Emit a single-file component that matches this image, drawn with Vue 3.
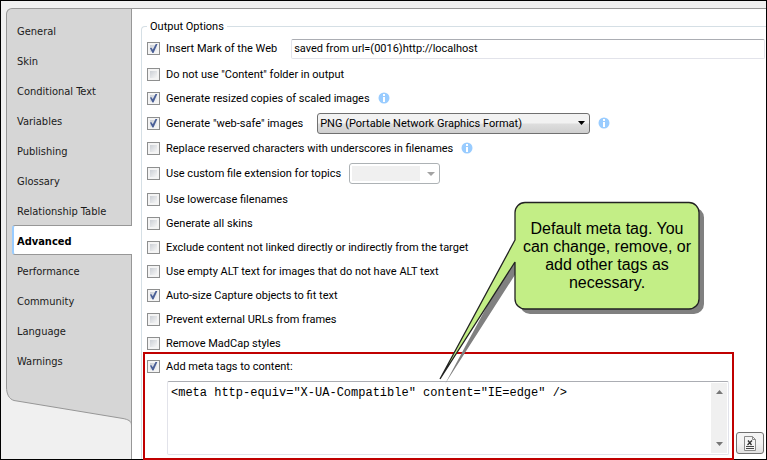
<script setup>
import { ref } from 'vue'

const tabs = ['General', 'Skin', 'Conditional Text', 'Variables', 'Publishing', 'Glossary', 'Relationship Table', 'Advanced', 'Performance', 'Community', 'Language', 'Warnings']
const active = ref('Advanced')

const options = ref([
  { id: 'motw', label: 'Insert Mark of the Web', on: true, field: 'text', size: 'first' },
  { id: 'folder', label: 'Do not use "Content" folder in output', on: false },
  { id: 'resized', label: 'Generate resized copies of scaled images', on: true, info: true },
  { id: 'websafe', label: 'Generate "web-safe" images', on: true, field: 'format', info: true, size: 'tall' },
  { id: 'reserved', label: 'Replace reserved characters with underscores in filenames', on: false, info: true },
  { id: 'extension', label: 'Use custom file extension for topics', on: false, field: 'extension', size: 'taller' },
  { id: 'lowercase', label: 'Use lowercase filenames', on: false },
  { id: 'skins', label: 'Generate all skins', on: false },
  { id: 'exclude', label: 'Exclude content not linked directly or indirectly from the target', on: false },
  { id: 'alt', label: 'Use empty ALT text for images that do not have ALT text', on: false },
  { id: 'autosize', label: 'Auto-size Capture objects to fit text', on: true },
  { id: 'frames', label: 'Prevent external URLs from frames', on: false },
  { id: 'madcap', label: 'Remove MadCap styles', on: false },
])
const mark = ref('saved from url=(0016)http://localhost')
const addMeta = ref(true)
const meta = ref('<meta http-equiv="X-UA-Compatible" content="IE=edge" />')
</script>

<template>
  <div class="window">
    <nav class="sidebar">
      <div class="tabs">
        <button v-for="t in tabs" :key="t" type="button" class="tab" :class="{ active: t === active }" @click="active = t">{{ t }}</button>
      </div>
      <svg class="tail" width="126" height="54" viewBox="0 0 126 54" aria-hidden="true">
        <path d="M0.5 0V12C0.5 19 3 24 8 25.500L117 43.500C122 44.500 125.500 46 125.500 50V0Z" fill="#d6d6d6" />
        <path d="M0.5 0V12C0.5 19 3 24 8 25.500L117 43.500C122 44.500 125.500 46 125.500 50" fill="none" stroke="#979797" />
        <path d="M125.500 0V54" stroke="#979797" />
      </svg>
      <div class="edge"></div>
    </nav>

    <main class="panel">
      <fieldset class="group">
        <legend>Output Options</legend>
        <div v-for="o in options" :key="o.id" class="row" :class="o.size">
          <input :id="o.id" v-model="o.on" type="checkbox" class="check" />
          <label :for="o.id">{{ o.label }}</label>
          <input v-if="o.field === 'text'" v-model="mark" type="text" class="mark" aria-label="Mark of the Web" />
          <span v-if="o.field === 'format'" class="combo format">
            <select aria-label="Image format"><option>PNG (Portable Network Graphics Format)</option></select>
            <svg width="7" height="4" viewBox="0 0 7 4" aria-hidden="true"><path d="M0 0H7L3.500 4Z" fill="#000" /></svg>
          </span>
          <span v-if="o.field === 'extension'" class="combo extension">
            <select aria-label="File extension" disabled></select>
            <svg width="8" height="4" viewBox="0 0 8 4" aria-hidden="true"><path d="M0 0H8L4 4Z" fill="#a3a3a3" /></svg>
          </span>
          <svg v-if="o.info" class="info" width="12" height="12" viewBox="0 0 12 12" aria-hidden="true">
            <circle cx="6" cy="6" r="5.500" fill="#99ccff" />
            <path d="M5 2H7V4H5ZM5 5H7V10H5Z" fill="#fff" />
          </svg>
        </div>

        <div class="bottom">
          <section class="highlight">
            <div class="row meta-row">
              <input id="meta" v-model="addMeta" type="checkbox" class="check" />
              <label for="meta">Add meta tags to content:</label>
            </div>
            <div class="editor">
              <textarea v-model="meta" aria-label="Meta tags" spellcheck="false"></textarea>
              <div class="scroll" aria-hidden="true">
                <svg width="7" height="4" viewBox="0 0 7 4"><path d="M0 4H7L3.500 0Z" fill="#777" /></svg>
                <svg width="7" height="4" viewBox="0 0 7 4"><path d="M0 0H7L3.500 4Z" fill="#777" /></svg>
              </div>
            </div>
          </section>
          <button type="button" class="doc" aria-label="Insert variable">
            <svg width="12" height="15" viewBox="0 0 12 15" aria-hidden="true">
              <path d="M0.500 0.500H8.500L11.500 3.500V14.500H0.500Z" fill="#f4f4f4" stroke="#8a8a8a" />
              <path d="M8.500 0.500V3.500H11.500" fill="none" stroke="#8a8a8a" />
              <path d="M4 4.500L7.500 9M8 4.500L3.500 9" stroke="#333" stroke-width="1.300" />
              <path d="M2 10.500H10M2 12.500H10" stroke="#444" />
            </svg>
          </button>
        </div>
      </fieldset>
    </main>

    <aside class="callout">
      <svg width="268" height="186" viewBox="0 0 268 186" aria-hidden="true">
        <path transform="translate(5 5)" d="M86 1.500H250A10 10 0 0 1 260 11.500V98A10 10 0 0 1 250 108H86A10 10 0 0 1 76 98V61L1 178L76 39V11.500A10 10 0 0 1 86 1.500Z" fill="#808080" />
        <path d="M86 1.500H250A10 10 0 0 1 260 11.500V98A10 10 0 0 1 250 108H86A10 10 0 0 1 76 98V61L1 178L76 39V11.500A10 10 0 0 1 86 1.500Z" fill="#c3ee86" stroke="#222" stroke-width="1.300" stroke-linejoin="bevel" />
      </svg>
      <p>Default meta tag. You can change, remove, or add other tags as necessary.</p>
    </aside>
  </div>
</template>

<style>
body { margin: 0; }
</style>

<style scoped>
* { box-sizing: border-box; }
.window {
  position: relative;
  display: flex;
  min-height: 100vh;
  padding: 7px 0 0 5px;
  border: 1px solid #000;
  background: #f0f0f0;
  color: #000;
  font: 11px/16px Roboto, "Open Sans", sans-serif;
}
.sidebar {
  display: flex;
  flex-direction: column;
  flex: none;
  width: 126px;
  font-family: "DejaVu Sans Condensed", "DejaVu Sans", sans-serif;
}
.tabs {
  padding-top: 6px;
  border: solid #979797;
  border-width: 1px 1px 0;
  border-top-left-radius: 6px;
  background: #d6d6d6;
}
.tab {
  display: block;
  width: 100%;
  height: 30px;
  padding: 4px 0 0 10px;
  border: 0;
  background: none;
  color: #1a1a1a;
  font: inherit;
  text-align: left;
}
.tab.active {
  width: 120px;
  margin-left: 5px;
  padding-left: 3px;
  border: solid #979797;
  border-width: 1px 0;
  border-left: 2px solid #99ccff;
  border-radius: 3px 0 0 3px;
  background: #fff;
  color: #000;
  font-weight: bold;
}
.tail { display: block; flex: none; }
.edge { flex: 1; border-right: 1px solid #979797; }
.panel {
  flex: 1;
  min-width: 0;
  padding: 9px 0 0 9px;
  border-top: 1px solid #979797;
  background: #fff;
}
.group {
  min-width: 0;
  margin: 0;
  padding: 0 0 0 1px;
  border: solid #d5dfe5;
  border-width: 1px 0 0 1px;
  border-top-left-radius: 4px;
}
legend { margin-left: 4px; padding: 1px 3px 0; }
.row { display: flex; align-items: center; height: 24px; padding: 0 1px 0 4px; }
.row.first { height: 27px; }
.row.tall { height: 26px; }
.row.taller { height: 27px; }
.check {
  position: relative;
  flex: none;
  width: 13px;
  height: 13px;
  margin: 0 6px 0 0;
  appearance: none;
  border: 1px solid #8e8f8f;
  background: linear-gradient(135deg, #cbcfd5, #f6f6f6) content-box, #f4f4f4;
  padding: 2px;
}
.check:checked::after {
  content: "";
  position: absolute;
  inset: 1px;
  background: #4a5f97;
  clip-path: polygon(10% 45%, 28% 42%, 42% 65%, 75% 0, 95% 0, 50% 100%, 38% 100%);
}
label { padding-top: 1px; white-space: nowrap; }
.mark {
  flex: 1;
  min-width: 0;
  height: 20px;
  margin-left: 14px;
  padding: 0 2px;
  border: 1px solid #e2e3ea;
  border-top-color: #abadb3;
  border-radius: 2px;
  background: #fff;
  font: inherit;
}
.combo { display: grid; align-items: center; }
.combo select, .combo svg { grid-area: 1 / 1; }
.combo svg { justify-self: end; margin-right: 5px; pointer-events: none; }
.combo select {
  width: 100%;
  height: 21px;
  padding: 1px 2px 0;
  appearance: none;
  border: 1px solid #707070;
  border-radius: 3px;
  background: linear-gradient(#f2f2f2 0 45%, #dddddd 55%, #cfcfcf);
  color: #000;
  font: inherit;
}
.format { width: 273px; margin-left: 14px; }
.extension { width: 91px; margin-left: 8px; }
.combo.extension select {
  padding: 2px 19px 2px 2px;
  border-color: #adb2b5;
  background: #f0f0f0 content-box;
  opacity: 1;
}
.info { flex: none; margin-left: 8px; }
.bottom { display: flex; align-items: flex-end; gap: 2px; margin: -3px 2px -1px 0; }
.highlight {
  flex: 1;
  min-width: 0;
  position: relative;
  padding: 0 3px 3px 0;
  border: 2px solid #c00000;
}
.meta-row { padding-left: 2px; }
.editor {
  display: flex;
  height: 74px;
  margin: 3px 0 0 22px;
  padding: 1px;
  border: 1px solid #e2e3ea;
  border-top-color: #abadb3;
  border-radius: 2px;
  background: #fff;
}
textarea {
  flex: 1;
  min-width: 0;
  padding: 2px;
  border: 0;
  resize: none;
  overflow: hidden;
  background: none;
  color: #000;
  font: 12px/16px "Liberation Mono", monospace;
}
.scroll {
  display: flex;
  flex-direction: column;
  align-items: center;
  justify-content: space-between;
  width: 16px;
  padding: 7px 0;
  background: #f0f0f0;
}
.doc {
  display: grid;
  place-items: center;
  flex: none;
  width: 28px;
  height: 22px;
  margin-bottom: 6px;
  padding: 0;
  border: 1px solid #707070;
  border-radius: 3px;
  background: linear-gradient(#f4f4f4 0 50%, #e0e0e0);
}
.callout { position: absolute; left: 438px; top: 200px; width: 268px; pointer-events: none; }
.callout svg { display: block; }
.callout p {
  position: absolute;
  left: 78px;
  top: 19px;
  width: 180px;
  margin: 0;
  font: 16px/18px "Liberation Sans", Arial, sans-serif;
  text-align: center;
}
</style>
